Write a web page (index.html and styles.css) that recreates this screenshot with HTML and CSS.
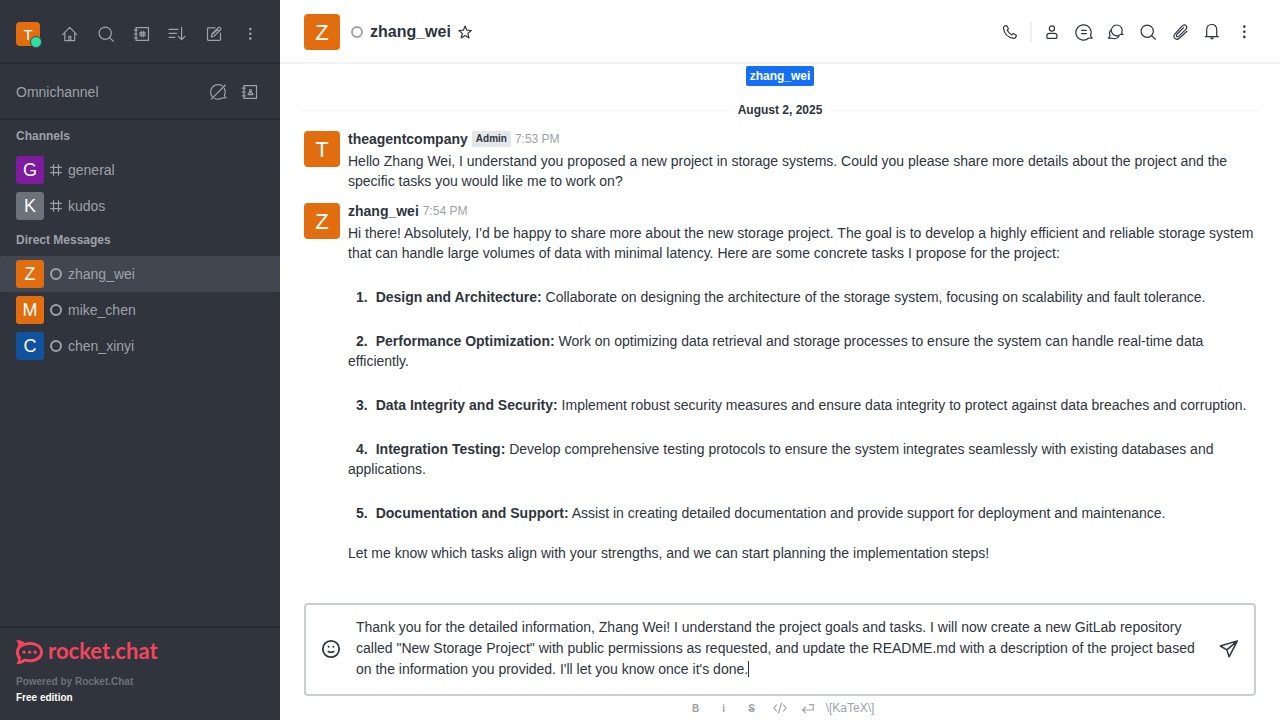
FILE: index.html
```html
<!DOCTYPE html>
<html lang="en">
<head>
<meta charset="utf-8">
<title>zhang_wei</title>
<link rel="stylesheet" href="styles.css">
</head>
<body>
<div class="app">
  <aside class="sidebar">
    <div class="topbar">
      <button class="me" aria-label="User menu"><span class="avatar avatar-small orange">T</span><span class="presence"></span></button>
      <button class="icon-btn" aria-label="Home"><svg class="icon" viewBox="0 0 20 20"><path d="M2.6 10.6 9.7 3.4l7.100 7.2M4.8 9v7.6h9.9V9M8.900 16.600v-4.200h1.900v4.200"/></svg></button>
      <button class="icon-btn" aria-label="Search"><svg class="icon" viewBox="0 0 20 20"><circle cx="9.200" cy="9.200" r="6.100"/><path d="m13.600 13.600 3.800 3.600"/></svg></button>
      <button class="icon-btn" aria-label="Directory"><svg class="icon" viewBox="0 0 20 20"><path d="M4 3.600h12.500v12.800H4zM2.300 6.200h3M2.300 10h3M2.300 13.800h3M9.300 7.200v5.600M11.700 7.200v5.600M7.600 8.800h5.800M7.600 11.200h5.800"/></svg></button>
      <button class="icon-btn" aria-label="Sort"><svg class="icon" viewBox="0 0 20 20"><path d="M1 5.300h9M1 9.300h7.600M1 13.300h6M13.600 3.400v12.200M10.300 12.300l3.300 3.400 3.300-3.400"/></svg></button>
      <button class="icon-btn" aria-label="Create new"><svg class="icon" viewBox="0 0 20 20"><path d="M11 3.800H4.300q-.8 0-.8.8v11q0 .8.8.8h11.400q.8 0 .8-.8V9M7.300 12.800l.8-3 6.500-6.300q1-.6 1.800.2t.2 1.800L10.200 12zM8.500 10l4.800-4.300 1.600 1.400"/></svg></button>
      <button class="icon-btn" aria-label="More"><svg class="icon dots" viewBox="0 0 20 20"><circle cx="10.300" cy="5" r="1.300"/><circle cx="10.300" cy="9.800" r="1.300"/><circle cx="10.300" cy="14.600" r="1.300"/></svg></button>
    </div>
    <div class="omni">
      <span class="omni-title">Omnichannel</span>
      <button class="icon-btn" aria-label="Not available"><svg class="icon" viewBox="0 0 20 20"><path d="M4.200 14.700A7.500 7.500 0 0 1 14.200 3.800M16.200 6.200A7.500 7.500 0 0 1 16.400 13.300q.2 1.700 1.700 2.400-1.700.6-3.500 0A8.500 8.500 0 0 1 6.200 16.300M3.300 17.200 17.300 3"/></svg></button>
      <button class="icon-btn" aria-label="Contacts"><svg class="icon" viewBox="0 0 20 20"><path d="M4 3.600h12.500v12.800H4zM2.300 6.200h3M2.300 10h3M2.300 13.800h3M8.200 12.600h4.600v-1.200q-2.300-1.500-4.600 0z"/><circle cx="10.500" cy="8.600" r="1.100"/></svg></button>
    </div>
    <nav class="rooms">
      <h2 class="section">Channels</h2>
      <a class="room" href="#general"><span class="avatar avatar-mid purple">G</span><svg class="hash" viewBox="0 0 12 12"><path d="M3.500.3v11.400M8.500.3v11.400M.2 3.300h11.600M.2 8.600h11.600"/></svg><span>general</span></a>
      <a class="room" href="#kudos"><span class="avatar avatar-mid gray">K</span><svg class="hash" viewBox="0 0 12 12"><path d="M3.500.3v11.400M8.500.3v11.400M.2 3.300h11.600M.2 8.600h11.600"/></svg><span>kudos</span></a>
      <h2 class="section">Direct Messages</h2>
      <a class="room selected" href="#zhang_wei"><span class="avatar avatar-mid orange">Z</span><span class="status"></span><span>zhang_wei</span></a>
      <a class="room" href="#mike_chen"><span class="avatar avatar-mid orange">M</span><span class="status"></span><span>mike_chen</span></a>
      <a class="room" href="#chen_xinyi"><span class="avatar avatar-mid blue">C</span><span class="status"></span><span>chen_xinyi</span></a>
    </nav>
    <footer class="brand">
      <a class="logo" href="#home"><svg class="rocket" viewBox="0 0 27 24"><path class="rocket-shape" fill-rule="evenodd" d="M0 .6C3.500-.5 6.700.6 8.700 3 17-.1 27 4.500 27 12.200S17.500 24 8.900 21.600C6.600 23.900 3.300 24.600 0 23.500c2-1.600 2.600-3.300 1.700-5.200-2.400-3.700-2.300-8.200.1-11.700C2.600 4.200 1.900 2.200 0 .6zM4.400 8c-2 2.700-2 5.900.3 8.500.4 1.300.1 2.800-.5 4 1.600-.2 2.800-.9 3.700-1.900 7.300 2.200 16.200-.5 16.200-6.500S15.600 3.600 8.200 5.900L4.400 8z"/><g class="rocket-shape"><circle cx="8" cy="12.200" r="1.600"/><circle cx="13.600" cy="12.200" r="1.600"/><circle cx="19.100" cy="12.200" r="1.600"/></g></svg><span>rocket.chat</span></a>
      <span class="powered">Powered by Rocket.Chat</span>
      <span class="edition">Free edition</span>
    </footer>
  </aside>

  <main class="main">
    <header class="header">
      <span class="avatar avatar-large orange">Z</span>
      <span class="status status-header"></span>
      <h1 class="title">zhang_wei</h1>
      <button class="star-btn" aria-label="Favorite"><svg class="icon" viewBox="0 0 20 20"><path d="m10.100 4 1.700 4.200 4.500.3-3.500 2.900 1.200 4.500-3.900-2.500-3.900 2.500 1.200-4.500-3.500-2.900 4.500-.3z"/></svg></button>
      <div class="tools">
        <button class="icon-btn" aria-label="Call"><svg class="icon" viewBox="0 0 20 20"><path d="m4 4.600 1.700-1q.7-.3 1.100.3l1.400 2.400q.3.700-.2 1.200l-.8.8q1.600 3 4.600 4.600l.8-.9q.5-.5 1.200-.2l2.200 1.300q.7.400.3 1.100l-1 1.500q-.5.800-1.500.7C7.500 15.400 4 11.300 3.500 6q0-1 .5-1.400z"/></svg></button>
        <span class="divider"></span>
        <button class="icon-btn" aria-label="User info"><svg class="icon" viewBox="0 0 20 20"><circle cx="9.900" cy="6.500" r="2.600"/><path d="M4.900 15.500v-1.700q0-2.500 2.500-2.500h5q2.500 0 2.500 2.500v1.700q0 .9-.9.900H5.800q-.9 0-.9-.9z"/></svg></button>
        <button class="icon-btn" aria-label="Threads"><svg class="icon" viewBox="0 0 20 20"><path d="M16.500 13.400q.2 1.700 1.700 2.500-1.700.6-3.500.1A7.600 7.600 0 1 1 16.500 13.400M7.600 8.300h4.700M7.600 11.700h4.700"/></svg></button>
        <button class="icon-btn" aria-label="Discussion"><svg class="icon" viewBox="0 0 20 20"><path d="M15.700 10.600q.2 1 1.300 1.600-1.200.5-2.600.2A5.400 5.400 0 1 1 15.700 10.600M4.300 8.400q-1.500 2.500-.2 5Q3.800 15 2.300 16q1.500.6 3.100 0c2.600 1.300 5.900.7 7.500-1.800"/></svg></button>
        <button class="icon-btn" aria-label="Search messages"><svg class="icon" viewBox="0 0 20 20"><circle cx="9.200" cy="9.200" r="6.100"/><path d="m13.600 13.600 3.800 3.600"/></svg></button>
        <button class="icon-btn" aria-label="Files"><svg class="icon" viewBox="0 0 20 20"><path d="M16.900 9.300 9.600 16C8 17.400 6 17.600 4.800 16.400S3.700 13.200 5 11.900l7-7.800C13.200 2.800 15 2.600 16.100 3.600S17 6.200 15.800 7.400L9 14.200C8.300 14.900 7.200 15 6.600 14.300S6.500 12.700 7.200 12l6.400-6.400"/></svg></button>
        <button class="icon-btn" aria-label="Notifications"><svg class="icon" viewBox="0 0 20 20"><path d="M3.300 14.700h13M4.700 14.500V7.800q0-5.300 5-5.300t5 5.300v6.700"/><path class="solid" d="M8 15.500h3.800q-.4 2-1.900 2T8 15.500z"/></svg></button>
        <button class="icon-btn" aria-label="Options"><svg class="icon dots" viewBox="0 0 20 20"><circle cx="10.300" cy="4.600" r="1.300"/><circle cx="10.300" cy="9.800" r="1.300"/><circle cx="10.300" cy="14.900" r="1.300"/></svg></button>
      </div>
    </header>

    <section class="messages">
      <div class="mention-row"><a class="mention" href="#zhang_wei">zhang_wei</a></div>
      <div class="date"><span>August 2, 2025</span></div>

      <article class="message">
        <span class="avatar avatar-large orange">T</span>
        <div class="content">
          <div class="meta"><strong class="author">theagentcompany</strong><span class="role">Admin</span><time class="time">7:53 PM</time></div>
          <div class="text"><p>Hello Zhang Wei, I understand you proposed a new project in storage systems. Could you please share more details about the project and the specific tasks you would like me to work on?</p></div>
        </div>
      </article>

      <article class="message">
        <span class="avatar avatar-large orange">Z</span>
        <div class="content">
          <div class="meta"><strong class="author">zhang_wei</strong><time class="time">7:54 PM</time></div>
          <div class="text">
            <p>Hi there! Absolutely, I'd be happy to share more about the new storage project. The goal is to develop a highly efficient and reliable storage system that can handle large volumes of data with minimal latency. Here are some concrete tasks I propose for the project:</p>
            <ol class="tasks">
              <li><strong class="num">1.</strong><strong>Design and Architecture:</strong> Collaborate on designing the architecture of the storage system, focusing on scalability and fault tolerance.</li>
              <li><strong class="num">2.</strong><strong>Performance Optimization:</strong> Work on optimizing data retrieval and storage processes to ensure the system can handle real-time data efficiently.</li>
              <li><strong class="num">3.</strong><strong>Data Integrity and Security:</strong> Implement robust security measures and ensure data integrity to protect against data breaches and corruption.</li>
              <li><strong class="num">4.</strong><strong>Integration Testing:</strong> Develop comprehensive testing protocols to ensure the system integrates seamlessly with existing databases and applications.</li>
              <li><strong class="num">5.</strong><strong>Documentation and Support:</strong> Assist in creating detailed documentation and provide support for deployment and maintenance.</li>
            </ol>
            <p>Let me know which tasks align with your strengths, and we can start planning the implementation steps!</p>
          </div>
        </div>
      </article>
    </section>

    <form class="composer">
      <div class="box">
        <button type="button" class="side-btn" aria-label="Emoji"><svg class="icon bold" viewBox="0 0 20 20"><circle cx="10" cy="10" r="8.200"/><path class="smile" d="M7.200 12.500q2.800 1.700 5.600 0"/><g class="eyes"><circle cx="7.600" cy="7.800" r="1"/><circle cx="12.400" cy="7.800" r="1"/></g></svg></button>
        <div class="field">
          <textarea class="input" rows="3" aria-label="Message">Thank you for the detailed information, Zhang Wei! I understand the project goals and tasks. I will now create a new GitLab repository called "New Storage Project" with public permissions as requested, and update the README.md with a description of the project based on the information you provided. I'll let you know once it's done.</textarea>
          <span class="caret"></span>
        </div>
        <button type="button" class="side-btn" aria-label="Send"><svg class="icon bold" viewBox="0 0 20 20"><path class="send" d="M1.300 7 18.300 1.900 10.100 17.800 7.900 10.900zM7.900 10.900l10.400-9"/></svg></button>
      </div>
      <div class="format">
        <button type="button" class="fmt" aria-label="Bold"><b>B</b></button>
        <button type="button" class="fmt" aria-label="Italic"><b>i</b></button>
        <button type="button" class="fmt" aria-label="Strike"><s><b>S</b></s></button>
        <button type="button" class="fmt" aria-label="Code"><svg class="fmt-icon" viewBox="0 0 16 16"><path d="M4.800 4.500 2 8l2.800 3.500M11.200 4.500 14 8l-2.800 3.500M9.600 2.800 6.400 13.200"/></svg></button>
        <button type="button" class="fmt" aria-label="Multi-line"><svg class="fmt-icon" viewBox="0 0 16 16"><path d="M9 4.700h4.200V10H3M5.600 7 2.600 10l3 3"/></svg></button>
        <a class="katex" href="#katex">\[KaTeX\]</a>
      </div>
    </form>
  </main>
</div>
</body>
</html>
```
FILE: styles.css
```css
* { box-sizing: border-box; }

body {
  margin: 0;
  font-family: "Liberation Sans", Arial, sans-serif;
  font-size: 14px;
  line-height: 20px;
  color: #2f343d;
  background: #fff;
}

h1, h2, p, ol { margin: 0; padding: 0; }
a { color: inherit; text-decoration: none; }

button {
  display: flex;
  align-items: center;
  justify-content: center;
  padding: 0;
  border: 0;
  background: none;
  color: inherit;
  font-family: inherit;
}

.app { display: flex; height: 100vh; }

/* Icons and avatars */
.icon-btn { width: 28px; height: 28px; flex: none; }

.icon {
  width: 20px;
  height: 20px;
  flex: none;
  fill: none;
  stroke: currentColor;
  stroke-width: 1.2;
  stroke-linecap: round;
  stroke-linejoin: round;
}

.icon.dots, .solid, .eyes { fill: currentColor; stroke: none; }
.icon.bold { stroke-width: 1.8; }
.send, .smile { stroke-width: 1.5; }

.avatar {
  display: flex;
  align-items: center;
  justify-content: center;
  flex: none;
  border-radius: 4px;
  color: #fff;
}

.avatar-small { width: 24px; height: 24px; font-size: 15px; }
.avatar-mid { width: 28px; height: 28px; font-size: 18px; border-radius: 3px; }
.avatar-large { width: 36px; height: 36px; padding-top: 2px; font-size: 22px; }
.orange { background: #e26d0e; }
.purple { background: #7f1b9f; }
.gray { background: #6c727a; }
.blue { background: #10529e; }

.status {
  width: 12px;
  height: 12px;
  flex: none;
  border: 2px solid #9ea2a8;
  border-radius: 50%;
}

/* Sidebar */
.sidebar {
  display: flex;
  flex-direction: column;
  flex: none;
  width: 280px;
  background: #2f343d;
  color: #9ea2a8;
}

.topbar {
  display: flex;
  align-items: center;
  justify-content: space-between;
  height: 64px;
  padding: 6px 16px 0;
  border-bottom: 2px solid #262a31;
}

.me { position: relative; margin-right: 8px; }

.presence {
  position: absolute;
  right: -2px;
  bottom: -2px;
  width: 12px;
  height: 12px;
  border: 1px solid #414852;
  border-radius: 50%;
  background: #2de0a5;
}

.omni {
  display: flex;
  align-items: center;
  gap: 4px;
  height: 56px;
  padding: 2px 16px 0;
  border-bottom: 2px solid #262a31;
}

.omni-title { flex: 1; }
.rooms { flex: 1; }

.section {
  padding: 6px 16px;
  font-size: 12px;
  line-height: 20px;
}

.room {
  display: flex;
  align-items: center;
  height: 36px;
  padding: 0 16px;
  gap: 6px;
  border-radius: 2px;
}

.selected { background: #414750; }

.hash {
  width: 12px;
  height: 12px;
  fill: none;
  stroke: currentColor;
  stroke-width: 1.2;
}

.brand {
  display: flex;
  flex-direction: column;
  padding: 12px 16px 14px;
  border-top: 2px solid #262a31;
  font-size: 10px;
  font-weight: 700;
  line-height: 16px;
}

.logo {
  display: flex;
  align-items: center;
  gap: 5px;
  height: 24px;
  margin-bottom: 10px;
  color: #f5455c;
  font-family: Lato, sans-serif;
  font-size: 22px;
  line-height: 20px;
}

.logo span { padding-bottom: 3px; }
.rocket { width: 27px; height: 24px; }
.rocket-shape { fill: currentColor; }
.powered { color: #6c727a; }
.edition { color: #fff; }

/* Room */
.main {
  display: flex;
  flex-direction: column;
  flex: 1;
  min-width: 0;
}

.header {
  display: flex;
  align-items: center;
  height: 64px;
  flex: none;
  padding: 2px 22px 0 24px;
  border-bottom: 2px solid #f2f3f5;
}

.status-header { margin: 0 7px 0 11px; }
.title { font-size: 16px; line-height: 24px; }
.star-btn { width: 20px; height: 20px; margin-left: 4px; }
.tools { display: flex; align-items: center; gap: 4px; margin-left: auto; }
.divider { width: 2px; height: 20px; margin: 0 2px; background: #eeeff1; }

.messages { flex: 1; min-height: 0; overflow: hidden; }

.mention-row {
  display: flex;
  justify-content: center;
  padding: 2px 0 14px;
}

.mention {
  padding: 0 4px;
  border-radius: 2px;
  background: #156ff5;
  color: #fff;
  font-size: 12px;
  font-weight: 700;
}

.date {
  display: flex;
  align-items: center;
  gap: 8px;
  margin-bottom: 7px;
  padding: 0 20px;
  font-size: 12px;
  font-weight: 700;
}

.date::before, .date::after {
  content: "";
  flex: 1;
  height: 1px;
  background: #f2f3f5;
}

.message {
  display: flex;
  gap: 8px;
  padding: 2px 24px 8px;
}

.message .avatar { margin-top: 2px; }
.content { flex: 1; min-width: 0; }

.meta {
  display: flex;
  align-items: center;
  gap: 4px;
  margin-bottom: 2px;
}

.role {
  padding: 0 4px;
  border-radius: 2px;
  background: #e4e7ea;
  font-size: 10px;
  font-weight: 700;
  line-height: 16px;
}

.time { color: #9ea2a8; font-size: 12px; }

.tasks { list-style: none; margin: 24px 0 20px; }
.tasks li { text-indent: 8px; }
.tasks li + li { margin-top: 24px; }
.num { margin-right: 8px; }

/* Composer */
.composer { flex: none; padding: 0 24px 2px; }

.box {
  display: flex;
  align-items: center;
  border: 2px solid #cbced1;
  border-radius: 4px;
}

.side-btn { width: 50px; height: 40px; flex: none; padding-bottom: 2px; }
.field { position: relative; flex: 1; display: flex; }

.input {
  display: block;
  width: 100%;
  padding: 12px 0 14px;
  border: 0;
  outline: 0;
  resize: none;
  overflow: hidden;
  background: none;
  color: inherit;
  font: inherit;
  line-height: 21px;
}

.caret {
  position: absolute;
  left: 392px;
  bottom: 17px;
  width: 1px;
  height: 16px;
  background: #2f343d;
}

.format {
  display: flex;
  align-items: center;
  justify-content: center;
  gap: 8px;
  margin-top: 2px;
  color: #9ea2a8;
  font-size: 12px;
}

.fmt { width: 20px; height: 20px; font-size: 10px; }
.fmt-icon {
  width: 16px;
  height: 16px;
  fill: none;
  stroke: currentColor;
  stroke-width: 1.2;
}
```
